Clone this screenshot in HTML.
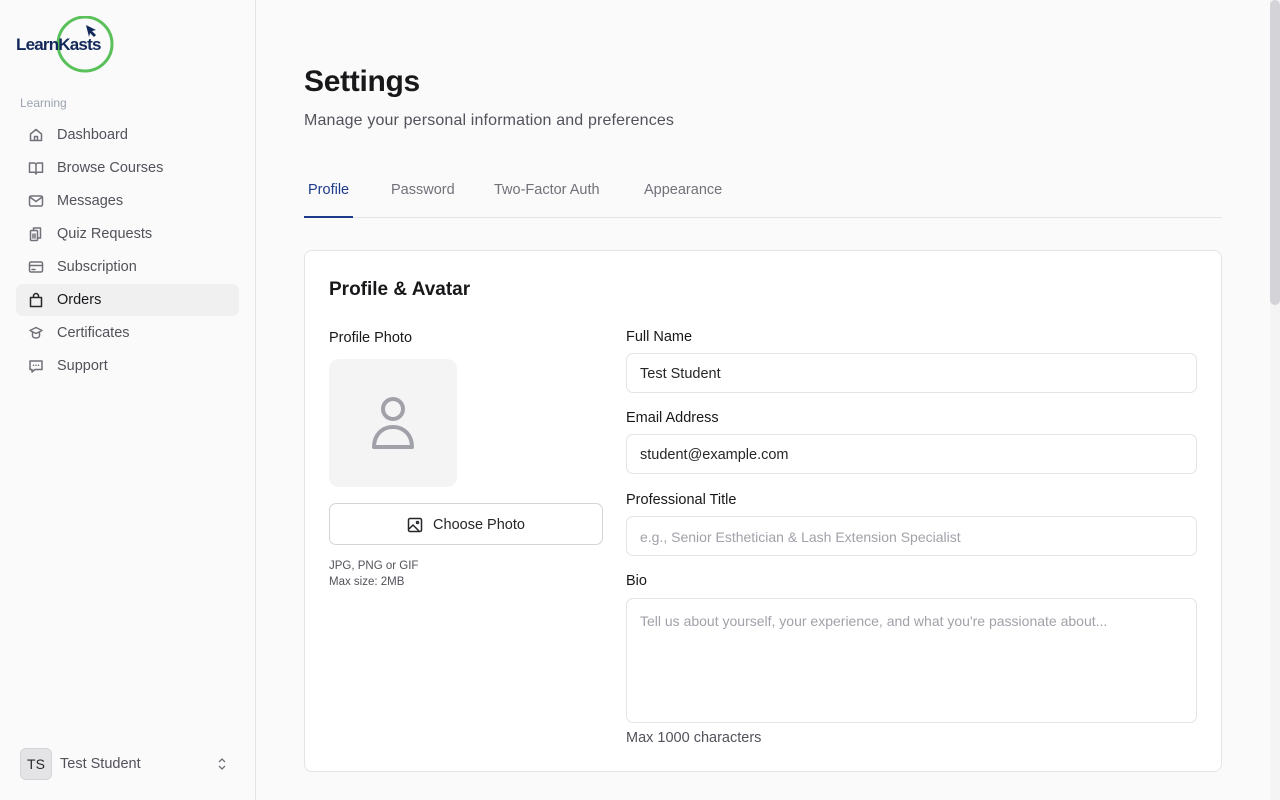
<!DOCTYPE html>
<html><head><meta charset="utf-8"><style>
*{box-sizing:border-box;margin:0;padding:0}
body{width:1280px;height:800px;overflow:hidden;font-family:"Liberation Sans",sans-serif;background:#fafafa;color:#18181b;position:relative}
.sb{position:absolute;left:0;top:0;width:256px;height:800px;background:#fafafa;border-right:1px solid #e4e4e7}
.logo{position:absolute;left:16px;top:16px}
.grp{position:absolute;left:20px;top:96px;font-size:12px;color:#9ca3af}
.nav{position:absolute;left:16px;top:119px;width:223px}
.it{height:32px;margin-bottom:1px;display:flex;align-items:center;padding-left:12px;font-size:14.5px;color:#52525b;border-radius:7px}
.it svg{width:16px;height:16px;margin-right:13px;stroke:#71717a;fill:none;stroke-width:1.5;stroke-linecap:round;stroke-linejoin:round}
.it.act{background:#f0f0f1;color:#18181b}
.it.act svg{stroke:#27272a}
.user{position:absolute;left:20px;top:748px;display:flex;align-items:center;width:214px}
.av{width:32px;height:32px;border-radius:6px;background:#e4e4e7;border:1px solid #d4d4d8;font-size:14px;display:flex;align-items:center;justify-content:center;color:#27272a}
.user span{margin-left:8px;font-size:14.5px;color:#52525b}
.main{position:absolute;left:304px;top:0;width:918px}
h1{position:absolute;top:65px;font-size:30px;font-weight:700;letter-spacing:-.3px}
.sub{position:absolute;top:112px;font-size:16px;color:#52525b;letter-spacing:.15px}
.tabs{position:absolute;top:168px;width:918px;height:50px;border-bottom:1px solid #e4e4e7}
.tab{position:absolute;top:14px;font-size:14.5px;color:#71717a}
.tab.a{color:#1e3a8a;border-bottom:2px solid #1e3a8a;padding:0 4px 18px;left:0}
.card{position:absolute;top:250px;width:918px;height:522px;background:#fff;border:1px solid #e4e4e7;border-radius:8px}
.ct{position:absolute;left:24px;top:28px;font-size:19px;font-weight:700}
.lbl{position:absolute;font-size:14.5px;color:#18181b}
.inp{position:absolute;left:321px;width:571px;height:40px;border:1px solid #e4e4e7;border-radius:7px;padding:0 13px;display:flex;align-items:center;font-size:14.5px;color:#27272a;padding-top:2px}
.ph{color:#a1a1aa;font-size:14px}
.photo{position:absolute;left:24px;top:108px;width:128px;height:128px;background:#f4f4f5;border-radius:10px}
.btn{position:absolute;left:24px;top:252px;width:274px;height:42px;border:1px solid #d4d4d8;border-radius:7px;display:flex;align-items:center;justify-content:center;font-size:14.5px;color:#27272a;padding-top:2px}
.note{position:absolute;left:24px;top:307px;font-size:11.5px;color:#52525b;line-height:16px}
.scroll{position:absolute;right:0;top:0;width:10px;height:800px;background:#f4f4f5}
.scroll div{width:10px;height:305px;background:#d4d4d8;border-radius:5px}
</style></head><body>
<div class="sb">
<div class="logo"><svg width="100" height="58" viewBox="0 0 100 58"><circle cx="69" cy="28" r="27" fill="none" stroke="#5ac05a" stroke-width="3"/><text x="0" y="34" font-family="Liberation Sans" font-weight="700" font-size="17" fill="#13285a" letter-spacing="-0.8">LearnKasts</text><path d="M70 9 L80 14 L76 15 L80 19 L78 21 L74 17 L73 21 Z" fill="#13285a"/></svg></div>
<div class="grp">Learning</div>
<div class="nav">
<div class="it"><svg viewBox="0 0 16 16"><path d="M2.5 7 8 2.5 13.5 7v6.5h-11z M6.5 13.5v-4h3v4"/></svg>Dashboard</div>
<div class="it"><svg viewBox="0 0 16 16"><path d="M1.5 3h4.5c1 0 2 .8 2 2v9c0-1-1-1.7-2-1.7H1.5zM14.5 3H10c-1 0-2 .8-2 2v9c0-1 1-1.7 2-1.7h4.5z"/></svg>Browse Courses</div>
<div class="it"><svg viewBox="0 0 16 16"><rect x="1.5" y="3" width="13" height="10" rx="1.5"/><path d="M1.8 4 8 8.5 14.2 4"/></svg>Messages</div>
<div class="it"><svg viewBox="0 0 16 16"><rect x="2.5" y="4.5" width="7" height="10" rx="1"/><path d="M5.5 4.5V2h7v10h-3M5 8v4M7 8v4"/></svg>Quiz Requests</div>
<div class="it"><svg viewBox="0 0 16 16"><rect x="1.5" y="3" width="13" height="10" rx="1.5"/><path d="M1.5 6.5h13M4 10.5h3"/></svg>Subscription</div>
<div class="it act"><svg viewBox="0 0 16 16"><path d="M2.5 5.5h11v9h-11zM5.5 5.5V4a2.5 2.5 0 0 1 5 0v1.5"/></svg>Orders</div>
<div class="it"><svg viewBox="0 0 16 16"><path d="M8 2.5 14 5.5 8 8.5 2 5.5zM4.5 7v4c0 1 1.5 2 3.5 2s3.5-1 3.5-2V7"/></svg>Certificates</div>
<div class="it"><svg viewBox="0 0 16 16"><path d="M2 3h12v8.5H7L4 14v-2.5H2z"/><path d="M5.5 7.3h.1M8 7.3h.1M10.5 7.3h.1"/></svg>Support</div>
</div>
<div class="user"><div class="av">TS</div><span>Test Student</span><svg style="margin-left:auto;margin-right:6px" width="12" height="16" viewBox="0 0 12 16" fill="none" stroke="#71717a" stroke-width="1.3"><path d="M3 6l3-3 3 3M3 10l3 3 3-3"/></svg></div>
</div>
<div class="main">
<h1>Settings</h1>
<div class="sub">Manage your personal information and preferences</div>
<div class="tabs">
<div class="tab a">Profile</div>
<div class="tab" style="left:87px">Password</div>
<div class="tab" style="left:190px">Two-Factor Auth</div>
<div class="tab" style="left:340px">Appearance</div>
</div>
<div class="card">
<div class="ct">Profile &amp; Avatar</div>
<div class="lbl" style="left:24px;top:79px">Profile Photo</div>
<div class="photo"><svg style="position:absolute;left:42px;top:36px" width="44" height="56" viewBox="0 0 44 56" fill="none" stroke="#a1a1aa" stroke-width="4"><circle cx="22" cy="14" r="10"/><path d="M3 52c0-12 8-20 19-20s19 8 19 20z" stroke-linejoin="round"/></svg></div>
<div class="btn"><svg width="16" height="16" viewBox="0 0 16 16" fill="none" stroke="#27272a" stroke-width="1.5" style="margin-right:10px"><rect x="1.5" y="1.5" width="13" height="13" rx="1.5"/><circle cx="10.5" cy="5.5" r="1"/><path d="M2 12l4-4 6 6"/></svg>Choose Photo</div>
<div class="note">JPG, PNG or GIF<br>Max size: 2MB</div>
<div class="lbl" style="left:321px;top:78px">Full Name</div>
<div class="inp" style="top:102px">Test Student</div>
<div class="lbl" style="left:321px;top:159px">Email Address</div>
<div class="inp" style="top:183px">student@example.com</div>
<div class="lbl" style="left:321px;top:241px">Professional Title</div>
<div class="inp" style="top:265px"><span class="ph">e.g., Senior Esthetician &amp; Lash Extension Specialist</span></div>
<div class="lbl" style="left:321px;top:322px">Bio</div>
<div class="inp" style="top:347px;height:125px;align-items:flex-start;padding-top:14px"><span class="ph">Tell us about yourself, your experience, and what you're passionate about...</span></div>
<div class="lbl" style="left:321px;top:479px;color:#52525b">Max 1000 characters</div>
</div>
</div>
<div class="scroll"><div></div></div>
</body></html>
